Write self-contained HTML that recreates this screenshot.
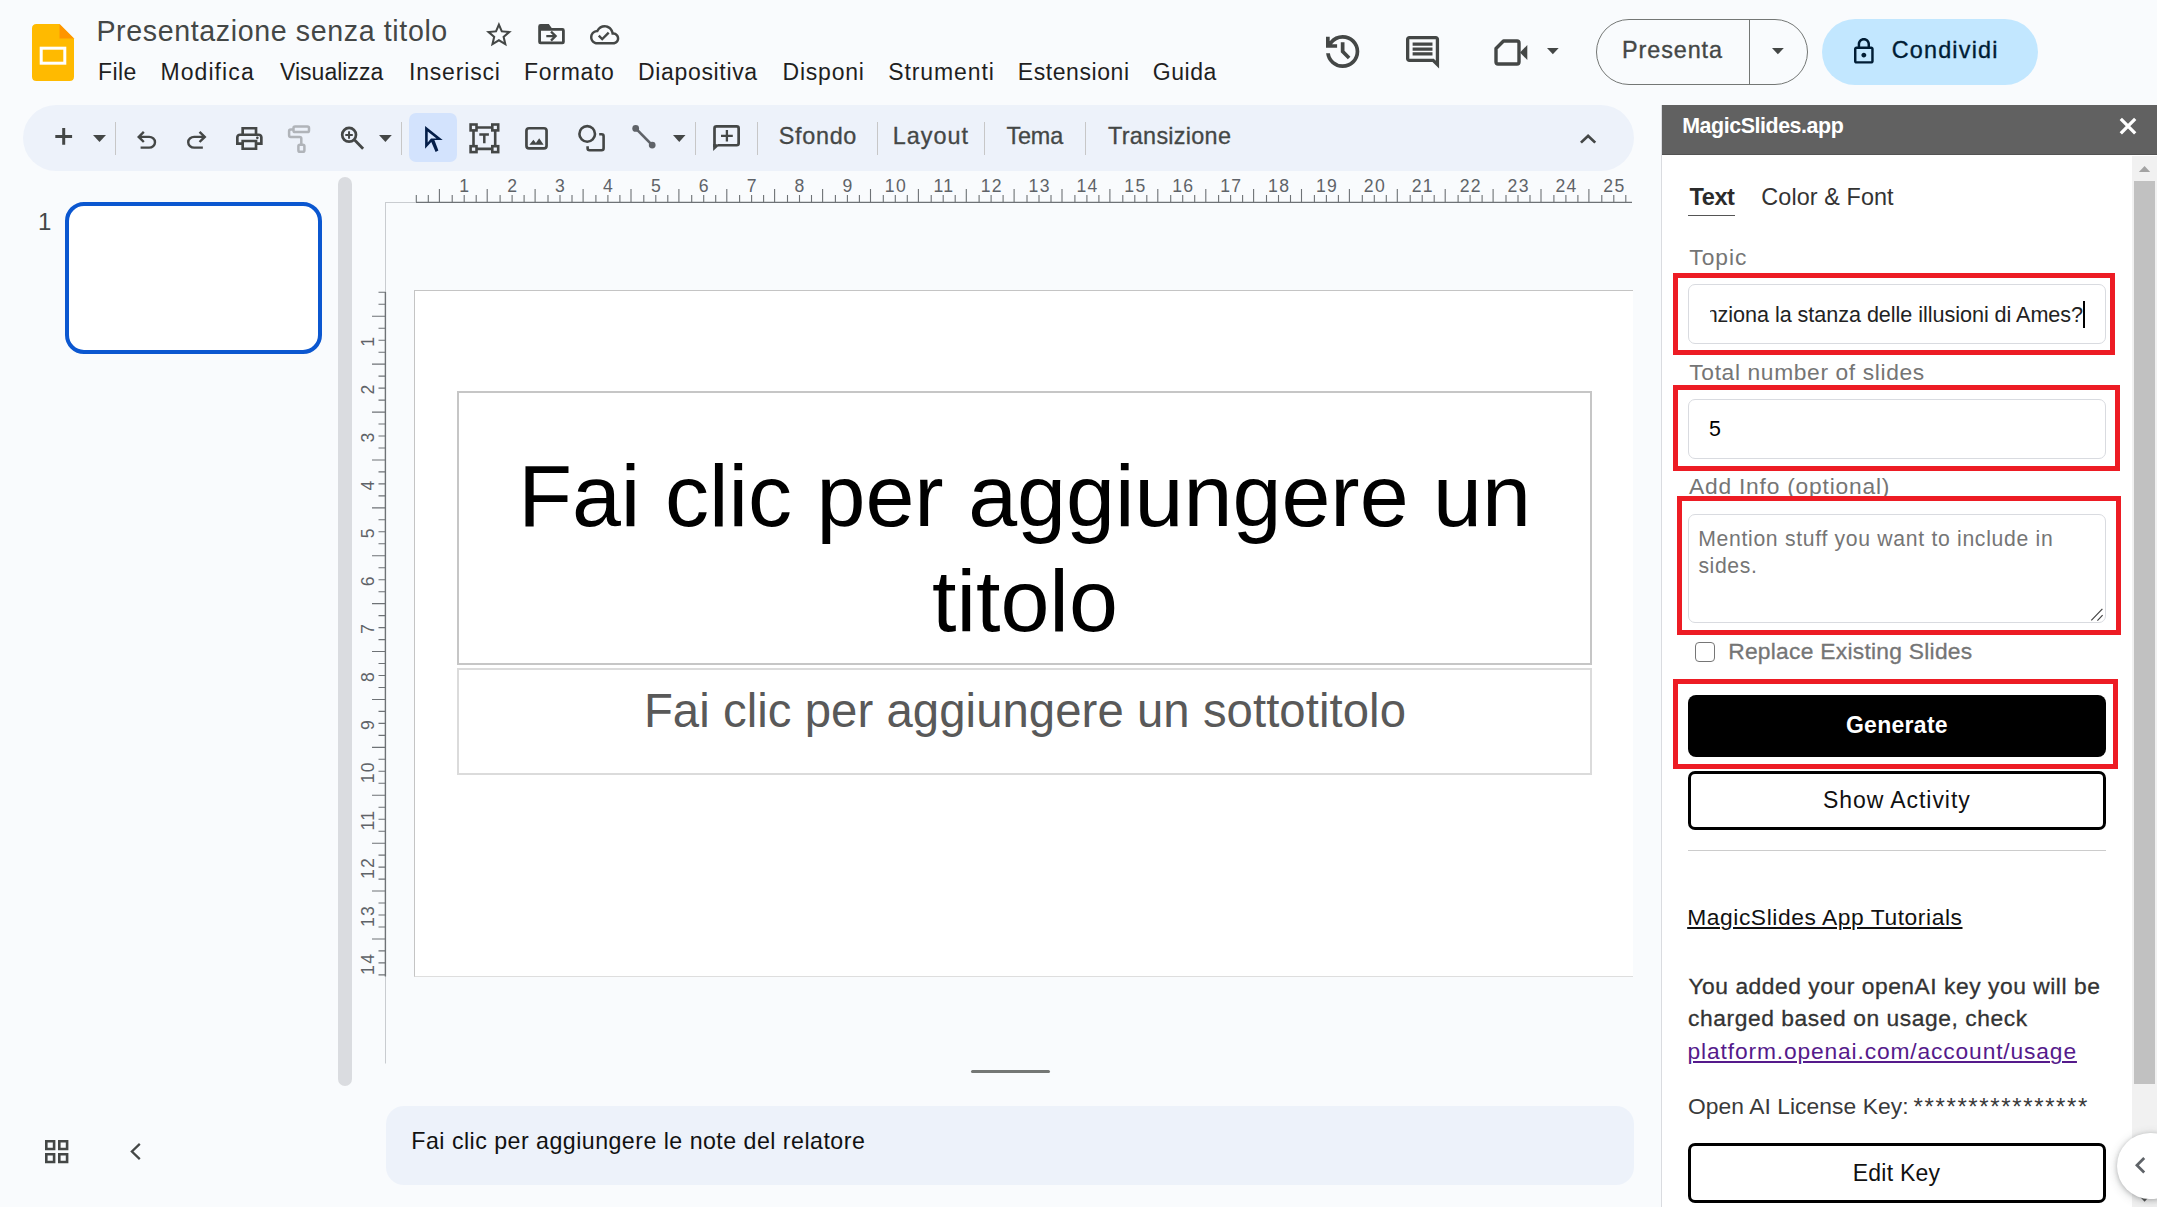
<!DOCTYPE html>
<html lang="it">
<head>
<meta charset="utf-8">
<title>Presentazione senza titolo - Presentazioni Google</title>
<style>
*{box-sizing:border-box;margin:0;padding:0}
html,body{width:2157px;height:1207px;overflow:hidden;background:#f9fbfd}
body{position:relative;font-family:"Liberation Sans",sans-serif;color:#1f1f1f}
.a{position:absolute}
.t{position:absolute;white-space:nowrap;line-height:1}
svg{position:absolute;overflow:visible}
/* header */
/* toolbar */
#toolbar{border-radius:33px;background:#edf2fa}
.tdiv{width:1px;height:33px;top:122px;background:#c7c7c7}
/* left */
#thumb{left:64.5px;top:202px;width:257px;height:152px;border:4px solid #0b57d0;border-radius:19px;background:#fff}
#lscroll{left:338px;top:177px;width:14px;height:909px;border-radius:7px;background:#dadce0}
/* canvas */
#slide{left:414px;top:290px;width:1219px;height:687px;background:#fff;border:1px solid #c4c4c4;border-bottom-color:#dedede;border-right:none}
.ph{border:2px solid #c6c6c6;background:#fff}
#notes{left:386px;top:1106px;width:1248px;height:79px;border-radius:18px;background:#edf2fa}
/* sidebar */
#sb{left:1661px;top:105px;width:496px;height:1102px;background:#fff;border-left:1.5px solid #dadce0}
#sbh{left:1662px;top:105px;width:495px;height:50px;background:#616161}
.red{border:5px solid #ed1c24}
.inp{border:1px solid #d9dbe0;border-radius:7px;background:#fff}
.btn{border:3px solid #000;border-radius:7px;background:#fff}
</style>
</head>
<body>
<!-- HEADER -->
<div id="header">
<!-- slides logo -->
<svg style="left:32px;top:24px" width="42" height="57" viewBox="0 0 42 57">
<path d="M4.5 0H27.5L42 14.5V52.5Q42 57 37.5 57H4.5Q0 57 0 52.5V4.5Q0 0 4.5 0Z" fill="#ffba00"/>
<path d="M27.5 0L42 14.5H27.5Z" fill="#ff9500"/>
<rect x="9.2" y="24.2" width="23.6" height="15" fill="none" stroke="#fff" stroke-width="3"/>
</svg>
<span class="t" style="left:96.41px;top:17px;font-size:28.6px;letter-spacing:0.619px;color:#444746">Presentazione senza titolo</span>
<svg style="left:485.5px;top:21.8px" width="25.8" height="24.2" viewBox="2 2 20 19" preserveAspectRatio="none"><path fill="#444746" d="M22 9.24l-7.19-.62L12 2 9.19 8.63 2 9.24l5.46 4.73L5.82 21 12 17.27 18.18 21l-1.63-7.03L22 9.24zM12 15.4l-3.76 2.27 1-4.28-3.32-2.88 4.38-.38L12 6.1l1.71 4.04 4.38.38-3.32 2.88 1 4.28L12 15.4z"/></svg>
<svg style="left:0;top:0" width="700" height="60"><path fill="#444746" fill-rule="evenodd" d="M540.6 24.1H548.8L551.7 28H562.4Q564.8 28 564.8 30.4V41.9Q564.8 44.3 562.4 44.3H540.6Q538.2 44.3 538.2 41.9V26.5Q538.2 24.1 540.6 24.1ZM541 30.8V41.5H562V30.8Z"/><path d="M546.3 36.1H554.6M551 31.7L555.6 36.1L551 40.6" fill="none" stroke="#444746" stroke-width="2.3"/></svg>
<svg style="left:589.7px;top:24.7px" width="29.3" height="19.5" viewBox="0 4 24 16" preserveAspectRatio="none"><path fill="#444746" d="M19.35 10.04C18.67 6.59 15.64 4 12 4 9.11 4 6.6 5.64 5.35 8.04 2.34 8.36 0 10.91 0 14c0 3.31 2.69 6 6 6h13c2.76 0 5-2.24 5-5 0-2.64-2.05-4.78-4.65-4.96zM19 18H6c-2.21 0-4-1.79-4-4 0-2.05 1.53-3.76 3.56-3.97l1.07-.11.5-.95C8.08 7.14 9.94 6 12 6c2.62 0 4.88 1.86 5.39 4.43l.3 1.5 1.53.11c1.56.1 2.78 1.41 2.78 2.96 0 1.65-1.35 3-3 3zm-9-3.82l-2.09-2.09L6.5 13.5 10 17l6.01-6.01-1.41-1.41z"/></svg>
<span class="t" style="left:98.06px;top:61px;font-size:23px;letter-spacing:0.363px;color:#1f1f1f">File</span>
<span class="t" style="left:160.41px;top:61px;font-size:23px;letter-spacing:1.089px;color:#1f1f1f">Modifica</span>
<span class="t" style="left:279.94px;top:61px;font-size:23px;letter-spacing:0.034px;color:#1f1f1f">Visualizza</span>
<span class="t" style="left:408.94px;top:61px;font-size:23px;letter-spacing:0.828px;color:#1f1f1f">Inserisci</span>
<span class="t" style="left:524.12px;top:61px;font-size:23px;letter-spacing:0.677px;color:#1f1f1f">Formato</span>
<span class="t" style="left:638.06px;top:61px;font-size:23px;letter-spacing:0.659px;color:#1f1f1f">Diapositiva</span>
<span class="t" style="left:782.62px;top:61px;font-size:23px;letter-spacing:0.761px;color:#1f1f1f">Disponi</span>
<span class="t" style="left:888.16px;top:61px;font-size:23px;letter-spacing:0.917px;color:#1f1f1f">Strumenti</span>
<span class="t" style="left:1017.84px;top:61px;font-size:23px;letter-spacing:0.566px;color:#1f1f1f">Estensioni</span>
<span class="t" style="left:1152.81px;top:61px;font-size:23px;letter-spacing:0.561px;color:#1f1f1f">Guida</span>
<svg style="left:1325.6px;top:34.9px" width="33.3" height="33" viewBox="3 3 18 18" preserveAspectRatio="none"><path fill="#444746" d="M12 21q-3.45 0-6.012-2.287Q3.425 16.425 3.05 13H5.1q.35 2.6 2.313 4.3Q9.375 19 12 19q2.925 0 4.963-2.037Q19 14.925 19 12t-2.037-4.963Q14.925 5 12 5q-1.725 0-3.225.8T6.25 8H9v2H3V4h2v2.35q1.275-1.6 3.113-2.475Q9.95 3 12 3q1.875 0 3.513.712 1.637.713 2.85 1.926 1.212 1.212 1.925 2.85Q21 10.125 21 12t-.712 3.512q-.713 1.638-1.925 2.85-1.213 1.213-2.85 1.926Q13.875 21 12 21Zm2.8-4.8L11 12.4V7h2v4.6l3.2 3.2Z"/></svg>
<svg style="left:1406.3px;top:35.9px" width="33.1" height="32.5" viewBox="2 2 20 20" preserveAspectRatio="none"><path fill="#444746" d="M21.99 4c0-1.1-.89-2-1.99-2H4c-1.1 0-2 .9-2 2v12c0 1.1.9 2 2 2h14l4 4-.01-18zM20 4v13.17L18.83 16H4V4h16zM6 12h12v2H6zm0-3h12v2H6zm0-3h12v2H6z"/></svg>
<!-- meet camera -->
<svg style="left:1494px;top:39px" width="34" height="27" viewBox="0 0 34 27">
<path d="M9.5 2H23Q25 2 25 4V23Q25 25 23 25H4Q2 25 2 23V9.5Z" fill="none" stroke="#444746" stroke-width="3.4" stroke-linejoin="round"/>
<path d="M26 13.5L33.3 6V21Z" fill="#444746"/>
</svg>
<svg style="left:1547.3px;top:48px" width="11.7" height="6.2" viewBox="7 10 10 5" preserveAspectRatio="none"><path fill="#444746" d="M7 10l5 5 5-5z"/></svg>
<div class="a" style="left:1596px;top:19px;width:212px;height:66px;border:1px solid #747775;border-radius:33px"></div>
<div class="a" style="left:1749px;top:19px;width:1px;height:66px;background:#747775"></div>
<span class="t" style="left:1622.12px;top:39px;font-size:23.4px;letter-spacing:0.897px;color:#444746;-webkit-text-stroke:0.35px #444746">Presenta</span>
<svg style="left:1771.8px;top:47.8px" width="11.8" height="6.3" viewBox="7 10 10 5" preserveAspectRatio="none"><path fill="#444746" d="M7 10l5 5 5-5z"/></svg>
<div class="a" style="left:1822px;top:19px;width:216px;height:66px;background:#c2e7ff;border-radius:33px"></div>
<svg style="left:1854px;top:37.8px" width="19.7" height="25.6" viewBox="4 1 16 21" preserveAspectRatio="none"><path fill="#001d35" d="M18 8h-1V6c0-2.76-2.24-5-5-5S7 3.24 7 6v2H6c-1.1 0-2 .9-2 2v10c0 1.1.9 2 2 2h12c1.1 0 2-.9 2-2V10c0-1.1-.9-2-2-2zM9 6c0-1.66 1.34-3 3-3s3 1.34 3 3v2H9V6zm9 14H6V10h12v10zm-6-3c1.1 0 2-.9 2-2s-.9-2-2-2-2 .9-2 2 .9 2 2 2z"/></svg>
<span class="t" style="left:1891.65px;top:39px;font-size:23.4px;letter-spacing:1.203px;color:#001d35;-webkit-text-stroke:0.35px #001d35">Condividi</span>
</div>
<!-- TOOLBAR -->
<div id="toolbar" class="a" style="left:23px;top:105px;width:1611px;height:66px"></div>
<div id="tbitems">
<svg style="left:93px;top:134.7px" width="13" height="7" viewBox="7 10 10 5" preserveAspectRatio="none"><path fill="#444746" d="M7 10l5 5 5-5z"/></svg>
<div class="a tdiv" style="left:115px"></div>
<svg style="left:136.8px;top:130.9px" width="19.2" height="17.8" viewBox="4 4 16 15" preserveAspectRatio="none"><path fill="#444746" d="M7 19v-2h7.1q1.575 0 2.737-1Q18 15 18 13.5T16.837 11Q15.675 10 14.1 10H7.8l2.6 2.6L9 14 4 9l5-5 1.4 1.4L7.8 8h6.3q2.425 0 4.163 1.575Q20 11.15 20 13.5q0 2.35-1.737 3.925Q16.525 19 14.1 19Z"/></svg>
<svg style="left:187.4px;top:130.9px" width="19.5" height="17.8" viewBox="4 4 16 15" preserveAspectRatio="none"><path fill="#444746" d="M9.9 19q-2.425 0-4.163-1.575Q4 15.85 4 13.5q0-2.35 1.737-3.925Q7.475 8 9.9 8h6.3l-2.6-2.6L15 4l5 5-5 5-1.4-1.4 2.6-2.6H9.9q-1.575 0-2.737 1Q6 12 6 13.5T7.163 16q1.162 1 2.737 1H17v2Z"/></svg>
<svg style="left:236.1px;top:126.7px" width="26.7" height="23" viewBox="2 3 20 18" preserveAspectRatio="none"><path fill="#444746" d="M19 8h-1V3H6v5H5c-1.66 0-3 1.34-3 3v6h4v4h12v-4h4v-6c0-1.66-1.34-3-3-3zM8 5h8v3H8V5zm8 12v2H8v-4h8v2zm2-2v-2H6v2H4v-4c0-.55.45-1 1-1h14c.55 0 1 .45 1 1v4h-2zM17 11.5a1 1 0 1 0 2 0a1 1 0 1 0-2 0z"/></svg>
<svg style="left:378.9px;top:135px" width="12.8" height="6.9" viewBox="7 10 10 5" preserveAspectRatio="none"><path fill="#444746" d="M7 10l5 5 5-5z"/></svg>
<div class="a tdiv" style="left:401px"></div>
<div class="a" style="left:409px;top:113px;width:48px;height:49px;border-radius:7px;background:#d3e3fd"></div>
<svg style="left:673px;top:135px" width="12.5" height="6.9" viewBox="7 10 10 5" preserveAspectRatio="none"><path fill="#444746" d="M7 10l5 5 5-5z"/></svg>
<div class="a tdiv" style="left:695px"></div>
<div class="a tdiv" style="left:757px"></div>
<svg id="tbicons" style="left:0;top:0" width="2157" height="1207" fill="none" stroke="#444746" stroke-width="2.6">
<!-- plus -->
<path d="M55.3 136.4H72.1M63.7 128V144.8" stroke-width="3"/>
<!-- paint format (disabled) -->
<g stroke="#b0b4b9" stroke-width="2.5"><rect x="293.5" y="126.5" width="15.5" height="5.5" rx="1.6"/><path d="M293.5 129.6H290.8Q289.1 129.6 289.1 131.2V135.3Q289.1 136.9 290.8 136.9H299.7Q301.3 136.9 301.3 138.5V144"/><rect x="298.4" y="144.7" width="6" height="7.1" rx="1.6"/></g>
<!-- zoom -->
<circle cx="349.1" cy="134.8" r="6.9" stroke-width="2.7"/><path d="M354.6 140L363.1 148.8" stroke-width="2.8"/><path d="M345.3 134.9H352.8M349.05 131.2V138.7" stroke-width="2"/>
<!-- cursor -->
<path d="M425.1 126L442.7 140.1H434.4L438.4 150.4L435.6 151.9L431.3 141.9L425.1 148.7ZM427.7 131.5V142.5L431 138.4H436.5Z" fill="#041e49" fill-rule="evenodd" stroke="none"/>
<!-- textbox -->
<path d="M473.5 127.5H495.2V148.9H473.5Z"/>
<g fill="#edf2fa"><rect x="470.6" y="124.5" width="5.9" height="5.9"/><rect x="492.3" y="124.5" width="5.9" height="5.9"/><rect x="470.6" y="146.2" width="5.9" height="5.9"/><rect x="492.3" y="146.2" width="5.9" height="5.9"/></g>
<path d="M479.3 134.6H488.9M484.3 134.6V143.2" stroke-width="2.5"/>
<!-- image -->
<rect x="526.45" y="128.25" width="20.1" height="20.1" rx="2.6" stroke-width="2.7"/>
<path d="M529.4 144.8L533.4 139.7L535.9 142.9L539.2 138.3L543.6 144.8Z" fill="#444746" stroke="none"/>
<!-- shapes -->
<circle cx="587.2" cy="133.9" r="7.8"/>
<path d="M599.2 134.2H601.6Q603.6 134.2 603.6 136.2V148.3Q603.6 150.3 601.6 150.3H589.6Q587.6 150.3 587.6 148.3V146.2"/>
<!-- line -->
<g stroke="#5f6368" fill="#5f6368"><path d="M635.7 128.4L652.2 145.1" stroke-width="2.7"/><circle cx="635.7" cy="128.4" r="3.4" stroke="none"/><circle cx="652.2" cy="145.1" r="3.4" stroke="none"/></g>
<!-- add comment -->
<path d="M714.5 147V128.4Q714.5 126.45 716.5 126.45H736.7Q738.65 126.45 738.65 128.4V143.3Q738.65 145.25 736.7 145.25H718" stroke-width="2.7"/>
<path d="M713.15 144V151L720 144.6Z" fill="#444746" stroke="none"/>
<path d="M721 135.8H732.8M726.9 130.1V141.5" stroke-width="2.3"/>
</svg>
<span class="t" style="left:778.78px;top:125px;font-size:23.4px;letter-spacing:0.691px;color:#444746;-webkit-text-stroke:0.3px #444746">Sfondo</span>
<div class="a tdiv" style="left:877px"></div>
<span class="t" style="left:892.68px;top:125px;font-size:23.4px;letter-spacing:1.023px;color:#444746;-webkit-text-stroke:0.3px #444746">Layout</span>
<div class="a tdiv" style="left:984px"></div>
<span class="t" style="left:1006.50px;top:125px;font-size:23.4px;letter-spacing:-0.175px;color:#444746;-webkit-text-stroke:0.3px #444746">Tema</span>
<div class="a tdiv" style="left:1085px"></div>
<span class="t" style="left:1108.06px;top:125px;font-size:23.4px;letter-spacing:0.281px;color:#444746;-webkit-text-stroke:0.3px #444746">Transizione</span>
<svg style="left:1579.8px;top:133.6px" width="16.2" height="9.6" viewBox="6 8 12 7.41" preserveAspectRatio="none"><path fill="#444746" d="M12 8l-6 6 1.41 1.41L12 10.83l4.59 4.58L18 14z"/></svg>
</div>
<!-- LEFT -->
<div id="left">
<span class="t" style="left:37.91px;top:210px;font-size:24px;color:#444746">1</span>
<div id="thumb" class="a"></div>
<div id="lscroll" class="a"></div>
<svg style="left:45px;top:1139.7px" width="23.4" height="23.3" viewBox="3 3 18 18" preserveAspectRatio="none"><path fill="#444746" d="M3 3v8h8V3H3zm6 6H5V5h4v4zm-6 4v8h8v-8H3zm6 6H5v-4h4v4zm4-16v8h8V3h-8zm6 6h-4V5h4v4zm-6 4v8h8v-8h-8zm6 6h-4v-4h4v4z"/></svg>
<svg style="left:120px;top:1135px" width="32" height="32"><path d="M19.8 8.9L11.9 16.5L19.8 24.1" fill="none" stroke="#444746" stroke-width="2.3"/></svg>
</div>
<!-- CANVAS -->
<div id="canvas">
<svg id="rulers" style="left:0;top:0" width="2157" height="1207" font-family="Liberation Sans, sans-serif" font-size="17.6" fill="#5f6368" text-anchor="middle">
<path d="M385.5 202V292M385 202.5H417M385.5 976V1063.5" stroke="#c9ccd0" stroke-width="1" fill="none"/>
<path d="M416 202.4H1632M385.4 292V976.5" stroke="#6e7276" stroke-width="1.4" fill="none"/>
<path d="M416.3 202V195M428.3 202V195M439.4 202V189M452.2 202V195M464.2 202V195M476.2 202V195M487.2 202V189M500.1 202V195M512.1 202V195M524.1 202V195M535.1 202V189M548.0 202V195M560.0 202V195M572.0 202V195M583.1 202V189M595.9 202V195M607.9 202V195M619.9 202V195M631.0 202V189M643.8 202V195M655.8 202V195M667.8 202V195M678.9 202V189M691.7 202V195M703.7 202V195M715.7 202V195M726.8 202V189M739.6 202V195M751.6 202V195M763.6 202V195M774.6 202V189M787.5 202V195M799.5 202V195M811.5 202V195M822.6 202V189M835.4 202V195M847.4 202V195M859.4 202V195M870.5 202V189M883.3 202V195M895.3 202V195M907.3 202V195M918.4 202V189M931.2 202V195M943.2 202V195M955.2 202V195M966.3 202V189M979.1 202V195M991.1 202V195M1003.1 202V195M1014.1 202V189M1027.0 202V195M1039.0 202V195M1051.0 202V195M1062.0 202V189M1074.9 202V195M1086.9 202V195M1098.9 202V195M1109.9 202V189M1122.8 202V195M1134.8 202V195M1146.8 202V195M1157.8 202V189M1170.7 202V195M1182.7 202V195M1194.7 202V195M1205.8 202V189M1218.6 202V195M1230.6 202V195M1242.6 202V195M1253.6 202V189M1266.5 202V195M1278.5 202V195M1290.5 202V195M1301.5 202V189M1314.4 202V195M1326.4 202V195M1338.4 202V195M1349.4 202V189M1362.3 202V195M1374.3 202V195M1386.3 202V195M1397.3 202V189M1410.2 202V195M1422.2 202V195M1434.2 202V195M1445.2 202V189M1458.1 202V195M1470.1 202V195M1482.1 202V195M1493.1 202V189M1506.0 202V195M1518.0 202V195M1530.0 202V195M1541.0 202V189M1553.9 202V195M1565.9 202V195M1577.9 202V195M1588.9 202V189M1601.8 202V195M1613.8 202V195M1625.8 202V195M385.5 292.3H378.5M385.5 304.3H378.5M385.5 316.2H372M385.5 328.2H378.5M385.5 340.2H378.5M385.5 352.2H378.5M385.5 364.1H372M385.5 376.1H378.5M385.5 388.1H378.5M385.5 400.1H378.5M385.5 412.1H372M385.5 424.0H378.5M385.5 436.0H378.5M385.5 448.0H378.5M385.5 460.0H372M385.5 471.9H378.5M385.5 483.9H378.5M385.5 495.9H378.5M385.5 507.9H372M385.5 519.8H378.5M385.5 531.8H378.5M385.5 543.8H378.5M385.5 555.8H372M385.5 567.7H378.5M385.5 579.7H378.5M385.5 591.7H378.5M385.5 603.6H372M385.5 615.6H378.5M385.5 627.6H378.5M385.5 639.6H378.5M385.5 651.5H372M385.5 663.5H378.5M385.5 675.5H378.5M385.5 687.5H378.5M385.5 699.5H372M385.5 711.4H378.5M385.5 723.4H378.5M385.5 735.4H378.5M385.5 747.4H372M385.5 759.3H378.5M385.5 771.3H378.5M385.5 783.3H378.5M385.5 795.2H372M385.5 807.2H378.5M385.5 819.2H378.5M385.5 831.2H378.5M385.5 843.2H372M385.5 855.1H378.5M385.5 867.1H378.5M385.5 879.1H378.5M385.5 891.0H372M385.5 903.0H378.5M385.5 915.0H378.5M385.5 927.0H378.5M385.5 939.0H372M385.5 950.9H378.5M385.5 962.9H378.5M385.5 974.9H378.5" stroke="#6e7276" stroke-width="1.1" fill="none"/>

<text x="464.2" y="192">1</text><text x="512.1" y="192">2</text><text x="560.0" y="192">3</text><text x="607.9" y="192">4</text><text x="655.8" y="192">5</text><text x="703.7" y="192">6</text><text x="751.6" y="192">7</text><text x="799.5" y="192">8</text><text x="847.4" y="192">9</text><text x="895.3" y="192" letter-spacing="1.3" dx="0.65">10</text><text x="943.2" y="192" letter-spacing="1.3" dx="0.65">11</text><text x="991.1" y="192" letter-spacing="1.3" dx="0.65">12</text><text x="1039.0" y="192" letter-spacing="1.3" dx="0.65">13</text><text x="1086.9" y="192" letter-spacing="1.3" dx="0.65">14</text><text x="1134.8" y="192" letter-spacing="1.3" dx="0.65">15</text><text x="1182.7" y="192" letter-spacing="1.3" dx="0.65">16</text><text x="1230.6" y="192" letter-spacing="1.3" dx="0.65">17</text><text x="1278.5" y="192" letter-spacing="1.3" dx="0.65">18</text><text x="1326.4" y="192" letter-spacing="1.3" dx="0.65">19</text><text x="1374.3" y="192" letter-spacing="1.3" dx="0.65">20</text><text x="1422.2" y="192" letter-spacing="1.3" dx="0.65">21</text><text x="1470.1" y="192" letter-spacing="1.3" dx="0.65">22</text><text x="1518.0" y="192" letter-spacing="1.3" dx="0.65">23</text><text x="1565.9" y="192" letter-spacing="1.3" dx="0.65">24</text><text x="1613.8" y="192" letter-spacing="1.3" dx="0.65">25</text>
<text transform="translate(374.3 341.8) rotate(-90)">1</text><text transform="translate(374.3 389.7) rotate(-90)">2</text><text transform="translate(374.3 437.6) rotate(-90)">3</text><text transform="translate(374.3 485.5) rotate(-90)">4</text><text transform="translate(374.3 533.4) rotate(-90)">5</text><text transform="translate(374.3 581.3) rotate(-90)">6</text><text transform="translate(374.3 629.2) rotate(-90)">7</text><text transform="translate(374.3 677.1) rotate(-90)">8</text><text transform="translate(374.3 725.0) rotate(-90)">9</text><text transform="translate(374.3 772.9) rotate(-90)" letter-spacing="1.3" dx="0.65">10</text><text transform="translate(374.3 820.8) rotate(-90)" letter-spacing="1.3" dx="0.65">11</text><text transform="translate(374.3 868.7) rotate(-90)" letter-spacing="1.3" dx="0.65">12</text><text transform="translate(374.3 916.6) rotate(-90)" letter-spacing="1.3" dx="0.65">13</text><text transform="translate(374.3 964.5) rotate(-90)" letter-spacing="1.3" dx="0.65">14</text>
</svg>
<div id="slide" class="a"></div>
<div id="ph1" class="a ph" style="left:457px;top:391px;width:1135px;height:274px"></div>
<div id="ph2" class="a ph" style="left:457px;top:668px;width:1135px;height:107px;border-color:#dbdbdb"></div>
<span class="t" style="left:518.17px;top:452px;font-size:88px;letter-spacing:0.007px;color:#000">Fai clic per aggiungere un</span>
<span class="t" style="left:932.03px;top:557px;font-size:88px;letter-spacing:-0.012px;color:#000">titolo</span>
<span class="t" style="left:643.90px;top:687px;font-size:47.3px;letter-spacing:0.060px;color:#595959">Fai clic per aggiungere un sottotitolo</span>
<div class="a" style="left:971px;top:1070px;width:79px;height:3px;border-radius:2px;background:#747775"></div>
<div id="notes" class="a"></div>
<span class="t" style="left:411.35px;top:1130px;font-size:23.2px;letter-spacing:0.473px;color:#111">Fai clic per aggiungere le note del relatore</span>
</div>
<!-- SIDEBAR -->
<div id="sidebar">
<div id="sb" class="a"></div>
<div id="sbh" class="a" style="border-bottom:1px solid #535353"></div>
<span class="t" style="left:1682.18px;top:116px;font-size:21.4px;letter-spacing:-0.429px;color:#fff;font-weight:bold">MagicSlides.app</span>
<svg style="left:2115px;top:114px" width="26" height="26"><path d="M5.8 4.9L20.2 19.3M20.2 4.9L5.8 19.3" stroke="#fff" stroke-width="3.3" fill="none"/></svg>
<!-- scrollbar -->
<div class="a" style="left:2132px;top:156px;width:25px;height:1051px;background:#f1f1f1"></div>
<div class="a" style="left:2134px;top:181px;width:21px;height:903px;background:#c1c1c1"></div>
<svg style="left:2132px;top:155px" width="25" height="1052"><path d="M6.9 17.1L12.55 10.9L18.2 17.1Z" fill="#a3a3a3"/><path d="M6.9 1040.6L12.55 1046.8L18.2 1040.6Z" fill="#505050"/></svg>
<!-- tabs -->
<span class="t" style="left:1689.59px;top:186px;font-size:23.6px;letter-spacing:-0.482px;color:#2b2b2b;font-weight:bold">Text</span>
<div class="a" style="left:1688px;top:214.5px;width:47px;height:1.4px;background:#555"></div>
<span class="t" style="left:1761.37px;top:186px;font-size:23.4px;letter-spacing:0.084px;color:#333">Color &amp; Font</span>
<span class="t" style="left:1689.34px;top:246px;font-size:22.8px;letter-spacing:0.940px;color:#757575">Topic</span>
<div class="a red" style="left:1673px;top:273px;width:442px;height:82px"></div>
<div class="a inp" style="left:1688px;top:284px;width:418px;height:60px"></div>
<div class="a" style="left:1709.5px;top:290px;width:380px;height:48px;overflow:hidden">
<span class="t" style="left:-3.87px;top:14px;font-size:21.6px;letter-spacing:-0.047px;color:#222">nziona la stanza delle illusioni di Ames?</span>
</div>
<div class="a" style="left:2082.6px;top:301px;width:2.2px;height:26.5px;background:#000"></div>
<span class="t" style="left:1689.34px;top:361px;font-size:22.8px;letter-spacing:0.625px;color:#757575">Total number of slides</span>
<div class="a red" style="left:1673px;top:385px;width:447px;height:86px"></div>
<div class="a inp" style="left:1688px;top:399px;width:418px;height:60px"></div>
<span class="t" style="left:1708.91px;top:419px;font-size:21.4px;color:#000">5</span>
<span class="t" style="left:1688.94px;top:475px;font-size:22.8px;letter-spacing:0.783px;color:#757575">Add Info (optional)</span>
<div class="a" style="left:1677px;top:496px;width:444px;height:139px;background:#fff"></div>
<div class="a red" style="left:1677px;top:496px;width:444px;height:139px"></div>
<div class="a inp" style="left:1688px;top:514px;width:418px;height:108.5px"></div>
<span class="t" style="left:1698.16px;top:528px;font-size:21.2px;letter-spacing:0.684px;color:#757575">Mention stuff you want to include in</span>
<span class="t" style="left:1698.38px;top:555px;font-size:21.2px;letter-spacing:0.624px;color:#757575">sides.</span>
<svg style="left:2088px;top:606px" width="16" height="16"><path d="M3.3 14.4L14.4 2.8M9.4 14.6L14.6 9.2" stroke="#444" stroke-width="1.2" fill="none"/></svg>
<div class="a" style="left:1695px;top:642px;width:20px;height:20px;border:1.7px solid #767676;border-radius:4px;background:#fff"></div>
<span class="t" style="left:1728.19px;top:640px;font-size:22.8px;letter-spacing:0.263px;color:#757575;-webkit-text-stroke:0.3px #757575">Replace Existing Slides</span>
<div class="a red" style="left:1673px;top:679px;width:445px;height:90px"></div>
<div class="a" style="left:1688px;top:695px;width:418px;height:62px;border-radius:8px;background:#000"></div>
<span class="t" style="left:1845.90px;top:714px;font-size:23px;letter-spacing:0.291px;color:#fff;font-weight:bold">Generate</span>
<div class="a btn" style="left:1688px;top:771px;width:418px;height:59px"></div>
<span class="t" style="left:1823.00px;top:789px;font-size:23px;letter-spacing:0.935px;color:#111">Show Activity</span>
<div class="a" style="left:1688px;top:849.5px;width:418px;height:1px;background:#ccc"></div>
<span class="t" style="left:1687.19px;top:906px;font-size:22.8px;letter-spacing:0.571px;color:#111;text-decoration:underline;text-underline-offset:1.5px;text-decoration-thickness:1.5px">MagicSlides App Tutorials</span>
<span class="t" style="left:1688.44px;top:975px;font-size:22.8px;letter-spacing:0.537px;color:#333;-webkit-text-stroke:0.3px #333">You added your openAI key you will be</span>
<span class="t" style="left:1688.06px;top:1007px;font-size:22.8px;letter-spacing:0.569px;color:#333;-webkit-text-stroke:0.3px #333">charged based on usage, check</span>
<span class="t" style="left:1687.56px;top:1040px;font-size:22.8px;letter-spacing:0.855px;color:#551a8b;text-decoration:underline;text-underline-offset:1.5px;text-decoration-thickness:1.5px">platform.openai.com/account/usage</span>
<span class="t" style="left:1687.94px;top:1095px;font-size:22.8px;letter-spacing:0.070px;color:#3a3a3a">Open AI License Key:</span>
<span class="t" style="left:1913.56px;top:1095px;font-size:24px;letter-spacing:1.625px;color:#3a3a3a">****************</span>
<div class="a btn" style="left:1688px;top:1143px;width:418px;height:59.5px"></div>
<span class="t" style="left:1852.69px;top:1162px;font-size:23px;letter-spacing:0.241px;color:#111">Edit Key</span>
<div class="a" style="left:2116.6px;top:1133.2px;width:67px;height:66px;border-radius:33px;background:#fff;box-shadow:0 1px 4px rgba(60,64,67,.3),0 2px 8px 2px rgba(60,64,67,.15)"></div>
<svg style="left:2135px;top:1157px" width="10.2" height="16.5" viewBox="8 6 7.41 12" preserveAspectRatio="none"><path fill="#5f6368" d="M15.41 7.41L14 6l-6 6 6 6 1.41-1.41L10.83 12z"/></svg>
</div>
</body>
</html>
